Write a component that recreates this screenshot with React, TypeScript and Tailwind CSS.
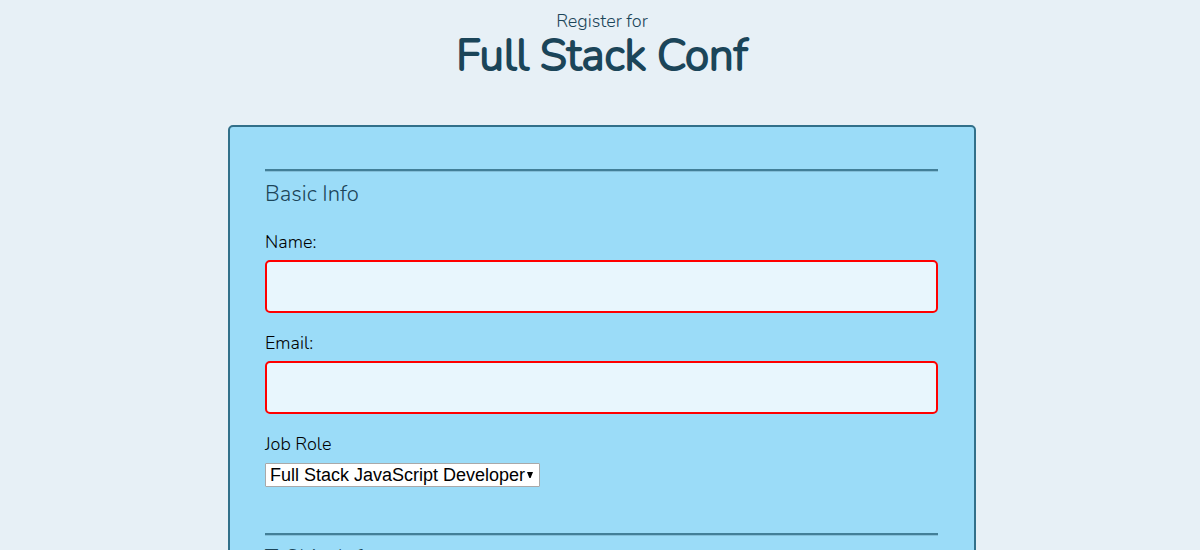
import type { ReactNode } from "react";

const roles = [
  "Full Stack JavaScript Developer",
  "Front End Developer",
  "Back End Developer",
  "Designer",
  "Student",
  "Other",
];

function Section({ title, children }: { title: string; children?: ReactNode }) {
  return (
    <fieldset className="mb-[46px]">
      <legend className="mb-[21px] w-full border-t-2 border-[#427f98] pt-2 text-[22px] leading-[30px] text-[#1b4559] shadow-[inset_0_1px_0_#84bfd9]">
        {title}
      </legend>
      {children}
    </fieldset>
  );
}

function TextField({ id, label, type }: { id: string; label: string; type: string }) {
  return (
    <div className="mb-[18px]">
      <label htmlFor={id} className="mb-[5px] block text-[18px] leading-[25px]">
        {label}
      </label>
      <input
        id={id}
        name={id}
        type={type}
        className="block h-[53px] w-full rounded-[5px] border-2 border-[#ff0000] bg-[#e8f6fd] px-3 text-[18px] outline-none"
      />
    </div>
  );
}

export default function App() {
  return (
    <div className="min-h-screen bg-[#e7f0f6] pl-1 font-['Nunito',sans-serif] font-light text-black">
      <header className="pt-[9px] text-center text-[#1b4559]">
        <p className="text-[18px] leading-[25px]">Register for</p>
        <h1 className="text-[44px] leading-[44px] [-webkit-text-stroke:2px_#1b4559]">Full Stack Conf</h1>
      </header>
      <form className="mx-auto mt-[47px] max-w-[748px] rounded-[5px] border-2 border-[#32708a] bg-[#9bdcf8] pl-[35px] pr-9 pt-[42px]">
        <Section title="Basic Info">
          <TextField id="name" label="Name:" type="text" />
          <TextField id="email" label="Email:" type="email" />
          <label htmlFor="role" className="mb-[6px] block text-[18px] leading-[25px]">
            Job Role
          </label>
          <div className="relative w-[275px]">
            <select
              id="role"
              name="role"
              className="block h-6 w-full appearance-none rounded-[1px] border border-[#a9a9a9] bg-white pl-1 font-['Liberation_Sans',sans-serif] text-[18px] font-normal leading-[22px]"
            >
              {roles.map((role) => (
                <option key={role}>{role}</option>
              ))}
            </select>
            <svg
              viewBox="0 0 6 6"
              className="pointer-events-none absolute right-[7px] top-[9px] size-[6px]"
              aria-hidden="true"
            >
              <path d="M0 0H6L3.6 6H2.4Z" />
            </svg>
          </div>
        </Section>
        <Section title="T-Shirt Info" />
      </form>
    </div>
  );
}
